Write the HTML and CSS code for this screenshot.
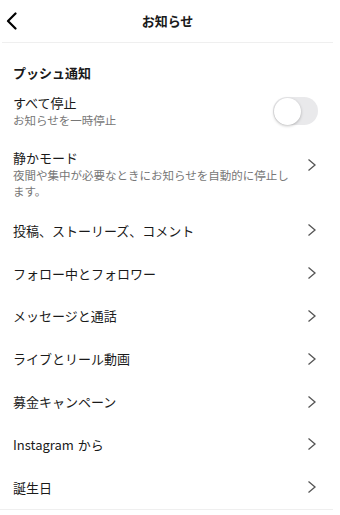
FILE: index.html
```html
<!DOCTYPE html>
<html>
<head>
    <meta charset="utf-8">
    <title>お知らせ</title>
    <link rel="stylesheet" href="styles.css">
</head>
<body>
    <div class="header">
        <button class="back-button">
            <svg width="11" height="18" viewBox="0 0 11 18"><polyline points="9.5,1.5 2,9 9.5,16.5" fill="none" stroke="#000" stroke-width="2.2" stroke-linecap="round" stroke-linejoin="round"/></svg>
        </button>
        <h3>お知らせ</h3>
        <div></div>
    </div>
    <div class="section">
        <div class="section-title">プッシュ通知</div>
        <div class="item item-toggle">
            <div class="item-text">
                <div class="item-label">すべて停止</div>
                <div class="item-sub">お知らせを一時停止</div>
            </div>
            <div class="toggle"><span class="knob"></span></div>
        </div>
        <div class="item item-quiet">
            <div class="item-text">
                <div class="item-label">静かモード</div>
                <div class="item-sub">夜間や集中が必要なときにお知らせを自動的に停止します。</div>
            </div>
            <span class="chevron"><svg width="10" height="14" viewBox="0 0 10 14"><polyline points="1.5,1.5 8,7 1.5,12.5" fill="none" stroke="#555" stroke-width="1.3"/></svg></span>
        </div>
    </div>
    <div class="list">
        <div class="row"><span>投稿、ストーリーズ、コメント</span><span class="chevron"><svg width="10" height="14" viewBox="0 0 10 14"><polyline points="1.5,1.5 8,7 1.5,12.5" fill="none" stroke="#555" stroke-width="1.3"/></svg></span></div>
        <div class="row"><span>フォロー中とフォロワー</span><span class="chevron"><svg width="10" height="14" viewBox="0 0 10 14"><polyline points="1.5,1.5 8,7 1.5,12.5" fill="none" stroke="#555" stroke-width="1.3"/></svg></span></div>
        <div class="row"><span>メッセージと通話</span><span class="chevron"><svg width="10" height="14" viewBox="0 0 10 14"><polyline points="1.5,1.5 8,7 1.5,12.5" fill="none" stroke="#555" stroke-width="1.3"/></svg></span></div>
        <div class="row"><span>ライブとリール動画</span><span class="chevron"><svg width="10" height="14" viewBox="0 0 10 14"><polyline points="1.5,1.5 8,7 1.5,12.5" fill="none" stroke="#555" stroke-width="1.3"/></svg></span></div>
        <div class="row"><span>募金キャンペーン</span><span class="chevron"><svg width="10" height="14" viewBox="0 0 10 14"><polyline points="1.5,1.5 8,7 1.5,12.5" fill="none" stroke="#555" stroke-width="1.3"/></svg></span></div>
        <div class="row"><span><span class="latin">Instagram</span>から</span><span class="chevron"><svg width="10" height="14" viewBox="0 0 10 14"><polyline points="1.5,1.5 8,7 1.5,12.5" fill="none" stroke="#555" stroke-width="1.3"/></svg></span></div>
        <div class="row"><span>誕生日</span><span class="chevron"><svg width="10" height="14" viewBox="0 0 10 14"><polyline points="1.5,1.5 8,7 1.5,12.5" fill="none" stroke="#555" stroke-width="1.3"/></svg></span></div>
    </div>
</body>
</html>
```

FILE: styles.css
```css
body {
    margin: 0;
    width: 340px;
    font-family: "Noto Sans CJK JP", "Noto Sans", sans-serif;
    color: #1a1a1a;
    background: #fff;
}
.header {
    display: grid;
    grid-template-columns: 40px 1fr 40px;
    align-items: center;
    height: 42px;
    margin: 0 7px 0 2px;
    border-bottom: 1.5px solid #efefef;
}
.back-button {
    display: flex;
    align-items: center;
    background: none;
    border: none;
    padding: 0 0 0 4px;
    height: 42px;
    cursor: pointer;
}
h3 {
    margin: 0;
    font-size: 13px;
    font-weight: 700;
    text-align: center;
    line-height: 18px;
}
.section {
    padding: 21px 0 0 13px;
}
.section-title {
    font-size: 13px;
    font-weight: 700;
    line-height: 18px;
    margin-bottom: 12px;
}
.item {
    display: flex;
    justify-content: space-between;
}
.item-toggle {
    align-items: center;
    padding-right: 22px;
}
.item-quiet {
    margin-top: 21px;
    align-items: flex-start;
}
.item-quiet .item-text {
    width: 282px;
}
.item-quiet .chevron {
    margin-top: 9px;
}
.item-label {
    font-size: 13px;
    line-height: 18px;
}
.item-sub {
    font-size: 11.5px;
    line-height: 16px;
    color: #777;
}
.toggle {
    width: 45px;
    height: 28px;
    border-radius: 14px;
    background: #e9e9eb;
    display: flex;
    align-items: center;
    padding: 0 1px;
    box-sizing: border-box;
}
.knob {
    width: 27px;
    height: 27px;
    border-radius: 50%;
    background: #fff;
    box-shadow: 0 1px 3px rgba(0, 0, 0, 0.25);
}
.chevron {
    display: flex;
    width: 10px;
    margin-right: 23px;
}
.list {
    margin-top: 10px;
    margin-right: 7px;
    border-bottom: 1.5px solid #efefef;
}
.row {
    display: flex;
    justify-content: space-between;
    align-items: center;
    height: 42.8px;
    padding-left: 13px;
    font-size: 13px;
}
.row .chevron {
    margin-right: 16px;
}
.latin {
    margin-right: 4px;
}
```
